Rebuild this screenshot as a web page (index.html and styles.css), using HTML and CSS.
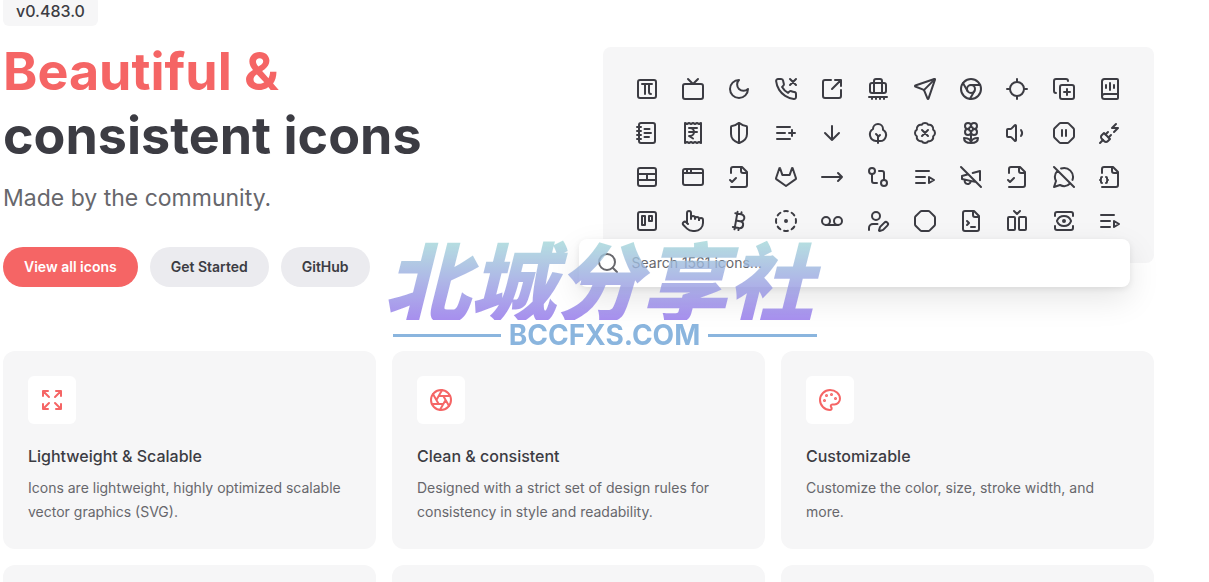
FILE: index.html
```
<!DOCTYPE html>
<html lang="en">
<head>
    <meta charset="UTF-8">
    <meta name="viewport" content="width=device-width, initial-scale=1.0">
    <title>Lucide</title>
    <link rel="stylesheet" href="styles.css">
</head>
<body>

<div class="page">
    <section class="hero">
        <div class="intro">
            <a class="version" href="#releases">v0.483.0</a>
            <h1><span class="brand">Beautiful &amp;</span><br>consistent icons</h1>
            <p class="tagline">Made by the community.</p>
            <div class="actions">
                <a class="button primary" href="#icons">View all icons</a>
                <a class="button" href="#guide">Get Started</a>
                <a class="button" href="#github">GitHub</a>
            </div>
        </div>

        <div class="showcase">
            <div class="icon-grid">
                <!-- row 1 -->
                <svg class="icon" viewBox="0 0 24 24"><rect width="18" height="18" x="3" y="3" rx="2"/><path d="M7 7h10M10 7v10M16 17a2 2 0 0 1-2-2V7"/></svg>
                <svg class="icon" viewBox="0 0 24 24"><rect width="20" height="15" x="2" y="7" rx="2"/><path d="m17 2-5 5-5-5"/></svg>
                <svg class="icon" viewBox="0 0 24 24"><path d="M12 3a6 6 0 0 0 9 9 9 9 0 1 1-9-9Z"/></svg>
                <svg class="icon" viewBox="0 0 24 24"><path d="m22 2-6 6M16 2l6 6"/><path d="M22 16.92v3a2 2 0 0 1-2.18 2 19.79 19.79 0 0 1-8.63-3.07 19.5 19.5 0 0 1-6-6 19.79 19.79 0 0 1-3.07-8.67A2 2 0 0 1 4.11 2h3a2 2 0 0 1 2 1.72 12.84 12.84 0 0 0 .7 2.81 2 2 0 0 1-.45 2.11L8.09 9.91a16 16 0 0 0 6 6l1.27-1.27a2 2 0 0 1 2.11-.45 12.84 12.84 0 0 0 2.81.7A2 2 0 0 1 22 16.92z"/></svg>
                <svg class="icon" viewBox="0 0 24 24"><path d="M21 13v6a2 2 0 0 1-2 2H5a2 2 0 0 1-2-2V5a2 2 0 0 1 2-2h6"/><path d="m21 3-9 9M15 3h6v6"/></svg>
                <svg class="icon" viewBox="0 0 24 24"><path d="M10 20v2M14 20v2M18 20v2M21 20H3M6 20v2M8 16V4a2 2 0 0 1 2-2h4a2 2 0 0 1 2 2v12"/><rect x="4" y="6" width="16" height="10" rx="2"/></svg>
                <svg class="icon" viewBox="0 0 24 24"><path d="M14.536 21.686a.5.5 0 0 0 .937-.024l6.5-19a.496.496 0 0 0-.635-.635l-19 6.5a.5.5 0 0 0-.024.937l7.93 3.18a2 2 0 0 1 1.112 1.11z"/><path d="m21.854 2.147-10.94 10.939"/></svg>
                <svg class="icon" viewBox="0 0 24 24"><circle cx="12" cy="12" r="10"/><circle cx="12" cy="12" r="4"/><path d="M21.17 8H12M3.95 6.06 8.54 14M10.88 21.94 15.46 14"/></svg>
                <svg class="icon" viewBox="0 0 24 24"><path d="M2 12h3M19 12h3M12 2v3M12 19v3"/><circle cx="12" cy="12" r="7"/></svg>
                <svg class="icon" viewBox="0 0 24 24"><path d="M15 12v6M12 15h6"/><rect width="14" height="14" x="8" y="8" rx="2"/><path d="M4 16c-1.1 0-2-.9-2-2V4c0-1.1.9-2 2-2h10c1.1 0 2 .9 2 2"/></svg>
                <svg class="icon" viewBox="0 0 24 24"><path d="M12 6v7M16 8v3M8 8v3"/><path d="M4 19.5v-15A2.5 2.5 0 0 1 6.5 2H19a1 1 0 0 1 1 1v18a1 1 0 0 1-1 1H6.5a1 1 0 0 1 0-5H20"/></svg>
                <!-- row 2 -->
                <svg class="icon" viewBox="0 0 24 24"><path d="M2 6h4M2 10h4M2 14h4M2 18h4"/><rect width="16" height="20" x="4" y="2" rx="2"/><path d="M9.5 8h5M9.5 12H16M9.5 16H14"/></svg>
                <svg class="icon" viewBox="0 0 24 24"><path d="M4 2v20l2-1 2 1 2-1 2 1 2-1 2 1 2-1 2 1V2l-2 1-2-1-2 1-2-1-2 1-2-1-2 1Z"/><path d="M8 7h8M12 17.5 8 15h1a4 4 0 0 0 0-8M8 11h8"/></svg>
                <svg class="icon" viewBox="0 0 24 24"><path d="M20 13c0 5-3.5 7.5-7.66 8.95a1 1 0 0 1-.67-.01C7.5 20.5 4 18 4 13V6a1 1 0 0 1 1-1c2 0 4.5-1.2 6.24-2.72a1.17 1.17 0 0 1 1.52 0C14.51 3.81 17 5 19 5a1 1 0 0 1 1 1z"/><path d="M12 22V2"/></svg>
                <svg class="icon" viewBox="0 0 24 24"><path d="M11 12H3M16 6H3M16 18H3M18 9v6M21 12h-6"/></svg>
                <svg class="icon" viewBox="0 0 24 24"><path d="M12 5v14M19 12l-7 7-7-7"/></svg>
                <svg class="icon" viewBox="0 0 24 24"><path d="M12 22v-7l-2-2"/><path d="M17 8v.8A6 6 0 0 1 13.8 20H10A6.5 6.5 0 0 1 7 8a5 5 0 0 1 10 0Z"/><path d="m14 14-2 2"/></svg>
                <svg class="icon" viewBox="0 0 24 24"><path d="M3.85 8.62a4 4 0 0 1 4.78-4.77 4 4 0 0 1 6.74 0 4 4 0 0 1 4.78 4.78 4 4 0 0 1 0 6.74 4 4 0 0 1-4.77 4.78 4 4 0 0 1-6.75 0 4 4 0 0 1-4.78-4.77 4 4 0 0 1 0-6.76Z"/><path d="m15 9-6 6M9 9l6 6"/></svg>
                <svg class="icon" viewBox="0 0 24 24"><path d="M12 5a3 3 0 1 1 3 3m-3-3a3 3 0 1 0-3 3m3-3v1M9 8a3 3 0 1 0 3 3M9 8h1m5 0a3 3 0 1 1-3 3m3-3h-1m-2 3v-1"/><circle cx="12" cy="8" r="2"/><path d="M12 10v12M12 22c4.2 0 7-1.667 7-5-4.2 0-7 1.667-7 5ZM12 22c-4.2 0-7-1.667-7-5 4.2 0 7 1.667 7 5Z"/></svg>
                <svg class="icon" viewBox="0 0 24 24"><path d="M11 4.702a.705.705 0 0 0-1.203-.498L6.413 7.587A1.4 1.4 0 0 1 5.416 8H3a1 1 0 0 0-1 1v6a1 1 0 0 0 1 1h2.416a1.4 1.4 0 0 1 .997.413l3.383 3.384A.705.705 0 0 0 11 19.298z"/><path d="M16 9a5 5 0 0 1 0 6"/></svg>
                <svg class="icon" viewBox="0 0 24 24"><path d="M10 15V9M14 15V9"/><path d="M2.586 16.726A2 2 0 0 1 2 15.312V8.688a2 2 0 0 1 .586-1.414l4.688-4.688A2 2 0 0 1 8.688 2h6.624a2 2 0 0 1 1.414.586l4.688 4.688A2 2 0 0 1 22 8.688v6.624a2 2 0 0 1-.586 1.414l-4.688 4.688a2 2 0 0 1-1.414.586H8.688a2 2 0 0 1-1.414-.586z"/></svg>
                <svg class="icon" viewBox="0 0 24 24"><path d="M6.3 20.3a2.4 2.4 0 0 0 3.4 0L12 18l-6-6-2.3 2.3a2.4 2.4 0 0 0 0 3.4Z"/><path d="m2 22 3-3M7.5 13.5 10 11M10.5 16.5 13 14M18 3l-4 4h6l-4 4"/></svg>
                <!-- row 3 -->
                <svg class="icon" viewBox="0 0 24 24"><rect width="18" height="18" x="3" y="3" rx="2"/><path d="M3 9h18M3 15h18M12 9v6"/></svg>
                <svg class="icon" viewBox="0 0 24 24"><rect x="2" y="4" width="20" height="16" rx="2"/><path d="M10 4v4M2 8h20M6 4v4"/></svg>
                <svg class="icon" viewBox="0 0 24 24"><path d="M4 22h14a2 2 0 0 0 2-2V7l-5-5H6a2 2 0 0 0-2 2v4"/><path d="M14 2v4a2 2 0 0 0 2 2h4M3 15l2 2 4-4"/></svg>
                <svg class="icon" viewBox="0 0 24 24"><path d="m22 13.29-3.33-10a.42.42 0 0 0-.14-.18.38.38 0 0 0-.22-.11.39.39 0 0 0-.23.07.42.42 0 0 0-.14.18l-2.26 6.67H8.32L6.1 3.26a.42.42 0 0 0-.1-.18.38.38 0 0 0-.26-.08.39.39 0 0 0-.23.07.42.42 0 0 0-.14.18L2 13.29a.74.74 0 0 0 .27.83L12 21l9.69-6.88a.71.71 0 0 0 .31-.83Z"/></svg>
                <svg class="icon" viewBox="0 0 24 24"><path d="m18 8 4 4-4 4M2 12h20"/></svg>
                <svg class="icon" viewBox="0 0 24 24"><circle cx="18" cy="18" r="3"/><circle cx="6" cy="6" r="3"/><path d="M13 6h3a2 2 0 0 1 2 2v7M11 18H8a2 2 0 0 1-2-2V9"/></svg>
                <svg class="icon" viewBox="0 0 24 24"><path d="M12 12H3M16 6H3M12 18H3M16 12l5 3-5 3v-6Z"/></svg>
                <svg class="icon" viewBox="0 0 24 24"><path d="M9.26 9.26 3 11v3l14.14 3.14M21 15.34V6l-7.31 2.03M11.6 16.8a3 3 0 1 1-5.8-1.6M2 2l20 20"/></svg>
                <svg class="icon" viewBox="0 0 24 24"><path d="M4 22h14a2 2 0 0 0 2-2V7l-5-5H6a2 2 0 0 0-2 2v4"/><path d="M14 2v4a2 2 0 0 0 2 2h4M3 15l2 2 4-4"/></svg>
                <svg class="icon" viewBox="0 0 24 24"><path d="M20.5 14.9A9 9 0 0 0 9.1 3.5M2 2l20 20M5.6 5.6C3 8.3 2.2 12.5 4 16l-2 6 6-2c3.4 1.8 7.6 1.1 10.3-1.7"/></svg>
                <svg class="icon" viewBox="0 0 24 24"><path d="M4 22h14a2 2 0 0 0 2-2V7l-5-5H6a2 2 0 0 0-2 2v4"/><path d="M14 2v4a2 2 0 0 0 2 2h4"/><path d="M4 12a1 1 0 0 0-1 1v1a1 1 0 0 1-1 1 1 1 0 0 1 1 1v1a1 1 0 0 0 1 1M8 18a1 1 0 0 0 1-1v-1a1 1 0 0 1 1-1 1 1 0 0 1-1-1v-1a1 1 0 0 0-1-1"/></svg>
                <!-- row 4 -->
                <svg class="icon" viewBox="0 0 24 24"><rect width="18" height="18" x="3" y="3" rx="2"/><rect width="3" height="9" x="7" y="7"/><rect width="3" height="5" x="14" y="7"/></svg>
                <svg class="icon" viewBox="0 0 24 24"><path d="M18 11v-1a2 2 0 0 0-2-2 2 2 0 0 0-2 2M14 10V9a2 2 0 0 0-2-2 2 2 0 0 0-2 2v1M10 9.5V4a2 2 0 0 0-2-2 2 2 0 0 0-2 2v10"/><path d="M18 11a2 2 0 1 1 4 0v3a8 8 0 0 1-8 8h-2c-2.8 0-4.5-.86-5.99-2.34l-3.6-3.6a2 2 0 0 1 2.83-2.82L7 15"/></svg>
                <svg class="icon" viewBox="0 0 24 24"><path d="M11.767 19.089c4.924.868 6.14-6.025 1.216-6.894m-1.216 6.894L5.86 18.047m5.908 1.042-.347 1.97m1.563-8.864c4.924.869 6.14-6.025 1.215-6.893m-1.215 6.893-3.94-.694m5.155-6.2L8.29 4.26m5.908 1.042.348-1.97M7.48 20.364l3.126-17.727"/></svg>
                <svg class="icon" viewBox="0 0 24 24"><path d="M10.1 2.18a9.93 9.93 0 0 1 3.8 0M17.6 3.71a9.95 9.95 0 0 1 2.69 2.7M21.82 10.1a9.93 9.93 0 0 1 0 3.8M20.29 17.6a9.95 9.95 0 0 1-2.7 2.69M13.9 21.82a9.94 9.94 0 0 1-3.8 0M6.4 20.29a9.95 9.95 0 0 1-2.69-2.7M2.18 13.9a9.93 9.93 0 0 1 0-3.8M3.71 6.4a9.95 9.95 0 0 1 2.7-2.69"/><circle cx="12" cy="12" r="1"/></svg>
                <svg class="icon" viewBox="0 0 24 24"><circle cx="6" cy="12" r="4"/><circle cx="18" cy="12" r="4"/><path d="M6 16h12"/></svg>
                <svg class="icon" viewBox="0 0 24 24"><path d="M11.5 15H7a4 4 0 0 0-4 4v2"/><path d="M21.378 16.626a1 1 0 0 0-3.004-3.004l-4.01 4.012a2 2 0 0 0-.506.854l-.837 2.87a.5.5 0 0 0 .62.62l2.87-.837a2 2 0 0 0 .854-.506z"/><circle cx="10" cy="7" r="4"/></svg>
                <svg class="icon" viewBox="0 0 24 24"><path d="M2.586 16.726A2 2 0 0 1 2 15.312V8.688a2 2 0 0 1 .586-1.414l4.688-4.688A2 2 0 0 1 8.688 2h6.624a2 2 0 0 1 1.414.586l4.688 4.688A2 2 0 0 1 22 8.688v6.624a2 2 0 0 1-.586 1.414l-4.688 4.688a2 2 0 0 1-1.414.586H8.688a2 2 0 0 1-1.414-.586z"/></svg>
                <svg class="icon" viewBox="0 0 24 24"><path d="M15 2H6a2 2 0 0 0-2 2v16a2 2 0 0 0 2 2h12a2 2 0 0 0 2-2V7Z"/><path d="M14 2v4a2 2 0 0 0 2 2h4M8 16l2-2-2-2M12 18h4"/></svg>
                <svg class="icon" viewBox="0 0 24 24"><rect width="7" height="13" x="3" y="8" rx="1"/><path d="m15 2-3 3-3-3"/><rect width="7" height="13" x="14" y="8" rx="1"/></svg>
                <svg class="icon" viewBox="0 0 24 24"><path d="M21 17v2a2 2 0 0 1-2 2H5a2 2 0 0 1-2-2v-2M21 7V5a2 2 0 0 0-2-2H5a2 2 0 0 0-2 2v2"/><circle cx="12" cy="12" r="1"/><path d="M18.944 12.33a1 1 0 0 0 0-.66 7.5 7.5 0 0 0-13.888 0 1 1 0 0 0 0 .66 7.5 7.5 0 0 0 13.888 0"/></svg>
                <svg class="icon" viewBox="0 0 24 24"><path d="M12 12H3M16 6H3M12 18H3M16 12l5 3-5 3v-6Z"/></svg>
            </div>
            <label class="search">
                <svg class="icon" viewBox="0 0 24 24"><circle cx="11" cy="11" r="8"/><path d="m21 21-4.3-4.3"/></svg>
                <input type="search" placeholder="Search 1561 icons..." aria-label="Search icons">
            </label>
        </div>
    </section>

    <section class="features">
        <article class="card">
            <div class="card-icon">
                <svg class="icon" viewBox="0 0 24 24"><path d="m15 15 6 6M15 9l6-6M21 16v5h-5M21 8V3h-5M3 16v5h5M3 21l6-6M3 8V3h5M9 9 3 3"/></svg>
            </div>
            <h2>Lightweight &amp; Scalable</h2>
            <p>Icons are lightweight, highly optimized scalable vector graphics (SVG).</p>
        </article>
        <article class="card">
            <div class="card-icon">
                <svg class="icon" viewBox="0 0 24 24"><circle cx="12" cy="12" r="10"/><path d="m14.31 8 5.74 9.94M9.69 8h11.48M7.38 12l5.74-9.94M9.69 16 3.95 6.06M14.31 16H2.83M16.62 12l-5.74 9.94"/></svg>
            </div>
            <h2>Clean &amp; consistent</h2>
            <p>Designed with a strict set of design rules for consistency in style and readability.</p>
        </article>
        <article class="card">
            <div class="card-icon">
                <svg class="icon" viewBox="0 0 24 24"><circle class="dot" cx="13.5" cy="6.5" r=".5"/><circle class="dot" cx="17.5" cy="10.5" r=".5"/><circle class="dot" cx="8.5" cy="7.5" r=".5"/><circle class="dot" cx="6.5" cy="12.5" r=".5"/><path d="M12 2C6.5 2 2 6.5 2 12s4.5 10 10 10c.926 0 1.648-.746 1.648-1.688 0-.437-.18-.835-.437-1.125-.29-.289-.438-.652-.438-1.125a1.64 1.64 0 0 1 1.668-1.668h1.996c3.051 0 5.555-2.503 5.555-5.554C21.965 6.012 17.461 2 12 2z"/></svg>
            </div>
            <h2>Customizable</h2>
            <p>Customize the color, size, stroke width, and more.</p>
        </article>
        <article class="card"></article>
        <article class="card"></article>
        <article class="card"></article>
    </section>
</div>

<div class="watermark">
    <div class="watermark-name" lang="zh-CN">北城分享社</div>
    <div class="watermark-site">BCCFXS.COM</div>
</div>

</body>
</html>
```
FILE: styles.css
```
* {
    box-sizing: border-box;
}
body {
    margin: 0;
    font-family: Inter, "Noto Sans CJK SC", sans-serif;
    font-size: 16px;
    line-height: 24px;
    color: #3c3c43;
    background-color: #fff;
}
h1, h2, p {
    margin: 0;
}
a {
    color: inherit;
    text-decoration: none;
}
.page {
    height: 100vh;
    padding: 0 3px;
    overflow: hidden;
}
.icon {
    display: block;
    width: 24px;
    height: 24px;
    fill: none;
    stroke: currentColor;
    stroke-width: 2;
    stroke-linecap: round;
    stroke-linejoin: round;
}
.icon .dot {
    fill: currentColor;
}

/* Hero */
.hero {
    display: grid;
    grid-template-columns: 1fr 1fr;
    gap: 48px;
    align-items: end;
    max-width: 1151px;
    margin-top: -4px;
}
.version {
    display: inline-block;
    padding: 0 13px;
    border-radius: 6px;
    background-color: #f6f6f7;
    font-weight: 500;
    line-height: 30px;
    vertical-align: top;
}
h1 {
    margin-top: 14px;
    font-size: 52px;
    font-weight: 700;
    line-height: 64px;
}
.brand {
    color: #f56565;
}
.tagline {
    margin-top: 12px;
    font-size: 23px;
    line-height: 36px;
    color: #67676c;
}
.actions {
    display: flex;
    gap: 12px;
    margin-top: 31px;
}
.button {
    padding: 0 21px;
    border-radius: 20px;
    background-color: #ebebef;
    font-size: 14px;
    font-weight: 600;
    line-height: 40px;
}
.button.primary {
    background-color: #f56565;
    color: #fff;
}

/* Icon panel with the search box over its lower edge */
.icon-grid {
    display: grid;
    grid-template-columns: repeat(11, 24px);
    justify-content: space-between;
    row-gap: 20px;
    padding: 30px 32px;
    border-radius: 8px;
    background-color: #f6f6f7;
}
.search {
    display: flex;
    align-items: center;
    gap: 12px;
    height: 48px;
    margin: -24px 24px 0 -24px;
    padding: 0 17px;
    border-radius: 8px;
    background-color: #fff;
    box-shadow: 0 12px 32px rgba(0, 0, 0, 0.1), 0 2px 6px rgba(0, 0, 0, 0.08);
    position: relative;
    color: #67676c;
}
.search input {
    flex: 1;
    min-width: 0;
    padding: 0;
    border: 0;
    outline: 0;
    background: none;
    font: inherit;
    font-size: 14px;
}
.search input::placeholder {
    color: #67676c;
}

/* Features */
.features {
    display: grid;
    grid-template-columns: repeat(3, 1fr);
    gap: 16px;
    max-width: 1151px;
    margin-top: 64px;
}
.card {
    min-height: 198px;
    padding: 25px;
    border-radius: 12px;
    background-color: #f6f6f7;
}
.card-icon {
    display: flex;
    align-items: center;
    justify-content: center;
    width: 48px;
    height: 48px;
    margin-bottom: 20px;
    border-radius: 6px;
    background-color: #fff;
    color: #f56565;
}
.card h2 {
    font-size: 16px;
    font-weight: 500;
    line-height: 24px;
}
.card p {
    padding-top: 8px;
    font-size: 14px;
    line-height: 24px;
    color: #67676c;
}

/* Watermark over the whole page */
.watermark {
    position: fixed;
    inset: 0;
    display: flex;
    flex-direction: column;
    align-items: center;
    justify-content: center;
    padding-top: 4px;
    opacity: 0.8;
    pointer-events: none;
}
.watermark-name {
    padding: 0 24px 0 12px;
    font-family: "Noto Sans CJK SC", sans-serif;
    font-size: 86px;
    font-weight: 900;
    font-style: italic;
    line-height: 84px;
    color: transparent;
    background-image: linear-gradient(#a5ded8, #9173ea);
    background-clip: text;
    -webkit-background-clip: text;
}
.watermark-site {
    display: flex;
    align-items: center;
    gap: 8px;
    width: 424px;
    font-size: 28px;
    font-weight: 700;
    line-height: 30px;
    color: #6da3d6;
}
.watermark-site::before,
.watermark-site::after {
    content: "";
    flex: 1;
    height: 3px;
    background-color: #6da3d6;
}
```
